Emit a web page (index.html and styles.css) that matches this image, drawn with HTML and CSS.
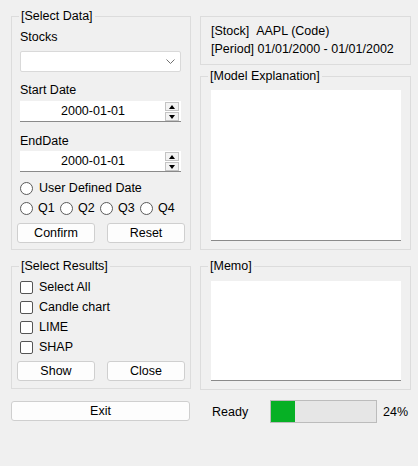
FILE: index.html
```html
<!DOCTYPE html>
<html>
<head>
<meta charset="utf-8">
<link rel="stylesheet" href="styles.css">
</head>
<body>
<div class="app">
  <fieldset class="group data">
    <legend>[Select Data]</legend>
    <div class="lbl l-stocks">Stocks</div>
    <div class="combo">
      <svg class="chev" width="9" height="5" viewBox="0 0 9 5"><path d="M0.5 0.5 L4.5 4.5 L8.5 0.5" fill="none" stroke="#707070" stroke-width="1"/></svg>
    </div>
    <div class="lbl l-start">Start Date</div>
    <div class="date">
      <span class="dval">2000-01-01</span>
      <span class="spin"><span class="sb"><i class="up"></i></span><span class="sb"><i class="dn"></i></span></span>
    </div>
    <div class="lbl l-end">EndDate</div>
    <div class="date">
      <span class="dval">2000-01-01</span>
      <span class="spin"><span class="sb"><i class="up"></i></span><span class="sb"><i class="dn"></i></span></span>
    </div>
    <div class="radio r1"><span class="rc"></span>User Defined Date</div>
    <div class="qrow">
      <div class="radio q"><span class="rc"></span>Q1</div>
      <div class="radio q"><span class="rc"></span>Q2</div>
      <div class="radio q"><span class="rc"></span>Q3</div>
      <div class="radio q"><span class="rc"></span>Q4</div>
    </div>
    <div class="btns">
      <div class="btn">Confirm</div>
      <div class="btn">Reset</div>
    </div>
  </fieldset>

  <div class="rightcol">
    <div class="info">
      <div class="iline">[Stock]&nbsp;&nbsp;AAPL (Code)</div>
      <div class="iline">[Period] 01/01/2000 - 01/01/2002</div>
    </div>
    <fieldset class="group model">
      <legend>[Model Explanation]</legend>
      <div class="pane pane-model"></div>
    </fieldset>
  </div>

  <fieldset class="group results">
    <legend>[Select Results]</legend>
    <div class="chk"><span class="cb"></span>Select All</div>
    <div class="chk"><span class="cb"></span>Candle chart</div>
    <div class="chk"><span class="cb"></span>LIME</div>
    <div class="chk"><span class="cb"></span>SHAP</div>
    <div class="btns btns2">
      <div class="btn">Show</div>
      <div class="btn">Close</div>
    </div>
  </fieldset>

  <fieldset class="group memo">
    <legend>[Memo]</legend>
    <div class="pane pane-memo"></div>
  </fieldset>

  <div class="btn exit">Exit</div>
  <div class="status">
    <span class="ready">Ready</span>
    <div class="prog"><div class="fill" style="width:24px"></div></div>
    <span class="pct">24%</span>
  </div>
</div>
</body>
</html>
```

FILE: styles.css
```css
html, body {
  margin: 0;
  padding: 0;
  background: #f0f0f0;
}
body {
  font-family: "Liberation Sans", Arial, sans-serif;
  font-size: 12.5px;
  color: #000;
  width: 418px;
  height: 466px;
  overflow: hidden;
}
.app {
  display: grid;
  grid-template-columns: 180px 211px;
  column-gap: 9px;
  row-gap: 9px;
  padding: 9px 0 0 11px;
  align-items: start;
}
.group {
  margin: 0;
  min-width: 0;
  border: 1px solid #dcdcdc;
  padding: 0;
  box-sizing: border-box;
}
.group legend {
  padding: 0 2px;
  margin-left: 7px;
  line-height: 14px;
  height: 14px;
}
.lbl {
  height: 16px;
  line-height: 16px;
  margin-left: 8px;
}
.l-stocks { margin-top: 6px; }
.l-start { margin-top: 10px; }
.l-end { margin-top: 11px; }

.combo {
  margin: 6px 0 0 8px;
  width: 161px;
  height: 21px;
  box-sizing: border-box;
  background: #fff;
  border: 1px solid #d9d9d9;
  border-radius: 2px;
  display: flex;
  align-items: center;
  justify-content: flex-end;
  padding-right: 5px;
}
.date {
  margin: 3px 0 0 8px;
  width: 161px;
  height: 21px;
  box-sizing: border-box;
  background: #fff;
  border-bottom: 1px solid #8a8a8a;
  display: flex;
  align-items: center;
}
.date + .lbl { }
.l-end + .date { margin-top: 2px; }
.dval {
  flex: 1;
  text-align: center;
  padding-left: 1px;
}
.spin {
  display: flex;
  flex-direction: column;
  width: 14px;
  height: 19px;
  margin-right: 2px;
  margin-top: 1px;
  gap: 1px;
}
.sb {
  flex: 1;
  border: 1px solid #c4c4c4;
  background: #f3f3f3;
  display: flex;
  align-items: center;
  justify-content: center;
}
.sb i {
  width: 0;
  height: 0;
  border-left: 3px solid transparent;
  border-right: 3px solid transparent;
}
.sb .up { border-bottom: 4px solid #000; }
.sb .dn { border-top: 4px solid #000; }

.radio {
  display: flex;
  align-items: center;
  height: 16px;
  line-height: 16px;
}
.rc {
  width: 11px;
  height: 11px;
  border: 1px solid #5a5a5a;
  border-radius: 50%;
  background: #fff;
  margin-right: 6px;
  flex: none;
}
.r1 { margin: 8px 0 0 8px; }
.qrow {
  display: flex;
  margin: 4px 0 0 8px;
}
.qrow .q { width: 40px; }
.qrow .q .rc { margin-right: 5px; }

.btns {
  display: flex;
  gap: 12px;
  margin: 7px 0 6px 5px;
}
.btn {
  width: 78px;
  height: 20px;
  box-sizing: border-box;
  background: #fdfdfd;
  border: 1px solid #cfcfcf;
  border-radius: 3px;
  text-align: center;
  line-height: 18px;
}

.rightcol {
  display: flex;
  flex-direction: column;
}
.info {
  margin-top: 7px;
  height: 49px;
  box-sizing: border-box;
  border: 1px solid #dcdcdc;
  padding: 5px 0 0 10px;
}
.iline {
  height: 18px;
  line-height: 18px;
  white-space: nowrap;
}
.model { margin-top: 4px; }
.pane {
  background: #fff;
  margin: 7px 9px 8px 10px;
  border-bottom: 1px solid #8a8a8a;
  box-sizing: border-box;
}
.pane-model { height: 151px; }
.pane-memo { height: 100px; margin-top: 8px; }

.results .chk {
  display: flex;
  align-items: center;
  height: 20px;
  margin-left: 8px;
}
.results .chk:first-of-type { margin-top: 4px; }
.cb {
  width: 11px;
  height: 11px;
  border: 1px solid #555;
  border-radius: 2px;
  background: #fff;
  margin-right: 6px;
  flex: none;
}
.btns2 { margin-top: 4px; margin-bottom: 7px; }
.memo { align-self: stretch; }

.exit {
  width: 179px;
  margin-top: 2px;
}
.status {
  display: flex;
  align-items: center;
  margin-top: 1px;
}
.ready {
  margin-left: 12px;
  width: 58px;
}
.prog {
  width: 107px;
  height: 23px;
  box-sizing: border-box;
  border: 1px solid #bcbcbc;
  background: #e6e6e6;
}
.fill {
  height: 100%;
  background: #06b025;
}
.pct { margin-left: 6px; }
```
